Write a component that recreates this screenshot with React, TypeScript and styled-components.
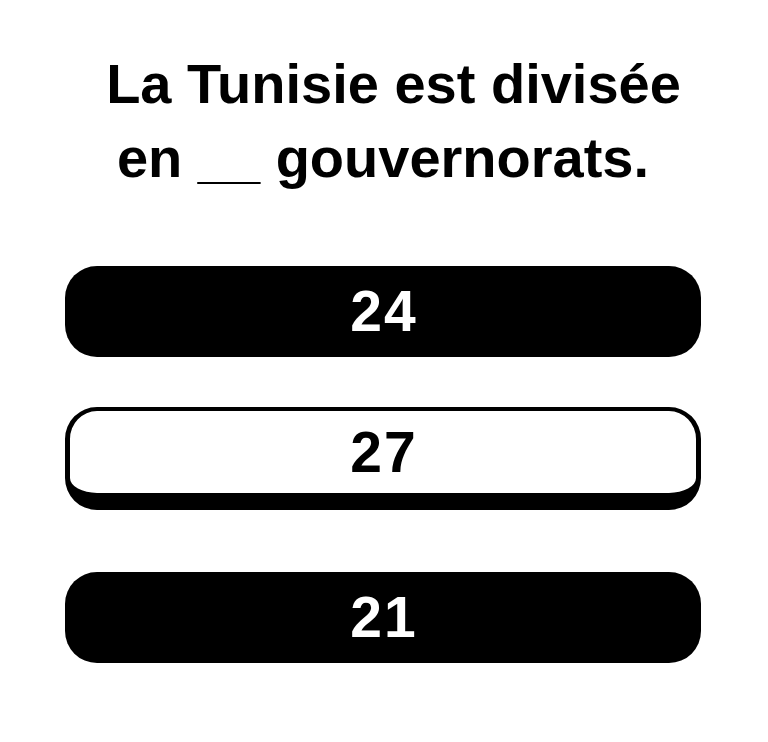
import React from "react";
import styled, { createGlobalStyle } from "styled-components";

const GlobalStyle = createGlobalStyle`
  html, body { margin: 0; padding: 0; background: #ffffff; }
  body { font-family: "Liberation Sans", Arial, sans-serif; }
`;

const Page = styled.div`
  width: 768px;
  min-height: 742px;
  box-sizing: border-box;
  padding: 47px 67px 0 65px;
  display: flex;
  flex-direction: column;
  align-items: stretch;
`;

const Question = styled.h1`
  margin: 0 0 71px 0;
  font-family: "Liberation Sans", Arial, sans-serif;
  font-weight: 700;
  font-size: 56px;
  line-height: 74px;
  text-align: center;
  color: #000;
`;

const Line = styled.span<{ $shift?: number }>`
  display: block;
  padding-left: ${(p) => (p.$shift ? `${p.$shift}px` : "0")};
`;

const Options = styled.div`
  display: flex;
  flex-direction: column;
  gap: 62px;
`;

const Option = styled.button<{ $raised?: boolean }>`
  box-sizing: border-box;
  width: 100%;
  height: ${(p) => (p.$raised ? "103px" : "91px")};
  margin-top: ${(p) => (p.$raised ? "-12px" : "0")};
  border-radius: 32px;
  border: ${(p) => (p.$raised ? "4px solid #000" : "none")};
  border-left-width: ${(p) => (p.$raised ? "5px" : "0")};
  border-right-width: ${(p) => (p.$raised ? "5px" : "0")};
  border-bottom-width: ${(p) => (p.$raised ? "17px" : "0")};
  background: ${(p) => (p.$raised ? "#fff" : "#000")};
  color: ${(p) => (p.$raised ? "#000" : "#fff")};
  display: flex;
  align-items: center;
  justify-content: center;
  padding: 0;
  cursor: pointer;
`;

const Value = styled.span`
  font-family: "Liberation Sans", Arial, sans-serif;
  font-weight: 700;
  font-size: 57px;
  line-height: 1;
  letter-spacing: 2px;
  padding-left: 2px;
`;

export default function App() {
  return (
    <>
      <GlobalStyle />
      <Page>
        <Question>
          <Line $shift={21}>La Tunisie est divisée</Line>
          <Line>en __ gouvernorats.</Line>
        </Question>
        <Options>
          <Option>
            <Value>24</Value>
          </Option>
          <Option $raised>
            <Value>27</Value>
          </Option>
          <Option>
            <Value>21</Value>
          </Option>
        </Options>
      </Page>
    </>
  );
}
